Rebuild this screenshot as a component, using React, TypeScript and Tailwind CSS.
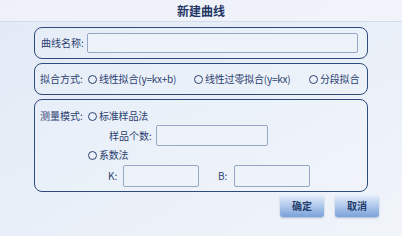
const font = { fontFamily: '"Noto Sans CJK SC", "Noto Sans", sans-serif' };

function Radio({ label }: { label: string }) {
  return (
    <div className="flex items-center gap-[2px] shrink-0 whitespace-nowrap">
      <span className="w-[9px] h-[9px] shrink-0 rounded-full border-[1.2px] border-[#2b4170] box-border" />
      <span className="text-[10px] leading-none text-[#2b4170] tracking-[-0.2px]">{label}</span>
    </div>
  );
}

function Field({ className }: { className: string }) {
  return <div className={`shrink-0 bg-[#eef3fa] border border-[#97a8c6] rounded-[2px] ${className}`} />;
}

function Label({ text, className }: { text: string; className: string }) {
  return (
    <span className={`shrink-0 whitespace-nowrap text-[10px] leading-none text-[#2b4170] ${className}`}>
      {text}
    </span>
  );
}

export default function App() {
  return (
    <div
      style={font}
      className="w-[402px] h-[236px] overflow-hidden bg-gradient-to-br from-[#e2eaf6] via-[#e9eff8] to-[#f1f5fa] flex flex-col"
    >
      <div className="h-[22px] shrink-0 flex items-center justify-center bg-[#f1f4f9]/80 border-b border-[#d3dceb]">
        <span className="text-[12px] font-bold text-[#1f3566] leading-none">新建曲线</span>
      </div>

      <div className="ml-[34px] w-[334px] mt-[5px] flex flex-col gap-[4px]">
        <div className="h-[32px] border-[1.5px] border-[#2f4a7c] rounded-[8px] flex items-center pl-[6px] bg-white/10">
          <Label text="曲线名称:" className="w-[46px]" />
          <Field className="w-[271px] h-[20px]" />
        </div>

        <div className="h-[32px] border-[1.5px] border-[#2f4a7c] rounded-[8px] flex items-center pl-[5px] bg-white/10">
          <Label text="拟合方式:" className="w-[48px]" />
          <div className="w-[106px] shrink-0">
            <Radio label="线性拟合(y=kx+b)" />
          </div>
          <div className="w-[115px] shrink-0">
            <Radio label="线性过零拟合(y=kx)" />
          </div>
          <Radio label="分段拟合" />
        </div>

        <div className="h-[93px] border-[1.5px] border-[#2f4a7c] rounded-[8px] flex flex-col pl-[5px] pt-[9px] bg-white/10">
          <div className="h-[14px] flex items-center">
            <Label text="测量模式:" className="w-[48px]" />
            <Radio label="标准样品法" />
          </div>
          <div className="mt-[2px] flex items-center pl-[69px]">
            <Label text="样品个数:" className="w-[47px]" />
            <Field className="w-[112px] h-[21px]" />
          </div>
          <div className="mt-[2px] h-[14px] flex items-center pl-[48px]">
            <Radio label="系数法" />
          </div>
          <div className="mt-[3px] flex items-center pl-[68px]">
            <Label text="K:" className="w-[15px]" />
            <Field className="w-[76px] h-[22px]" />
            <Label text="B:" className="ml-[19px] w-[16px]" />
            <Field className="w-[76px] h-[22px]" />
          </div>
        </div>
      </div>

      <div className="mt-[3px] ml-[280px] flex gap-[11px]">
        {['确定', '取消'].map((t) => (
          <button
            key={t}
            type="button"
            className="w-[44px] h-[22px] rounded-[3px] bg-gradient-to-b from-[#e6eefa] to-[#7aa2da] shadow-[0_1px_2px_rgba(40,70,120,0.35)] text-[10px] font-bold text-[#253e6c] leading-none"
          >
            {t}
          </button>
        ))}
      </div>
    </div>
  );
}
